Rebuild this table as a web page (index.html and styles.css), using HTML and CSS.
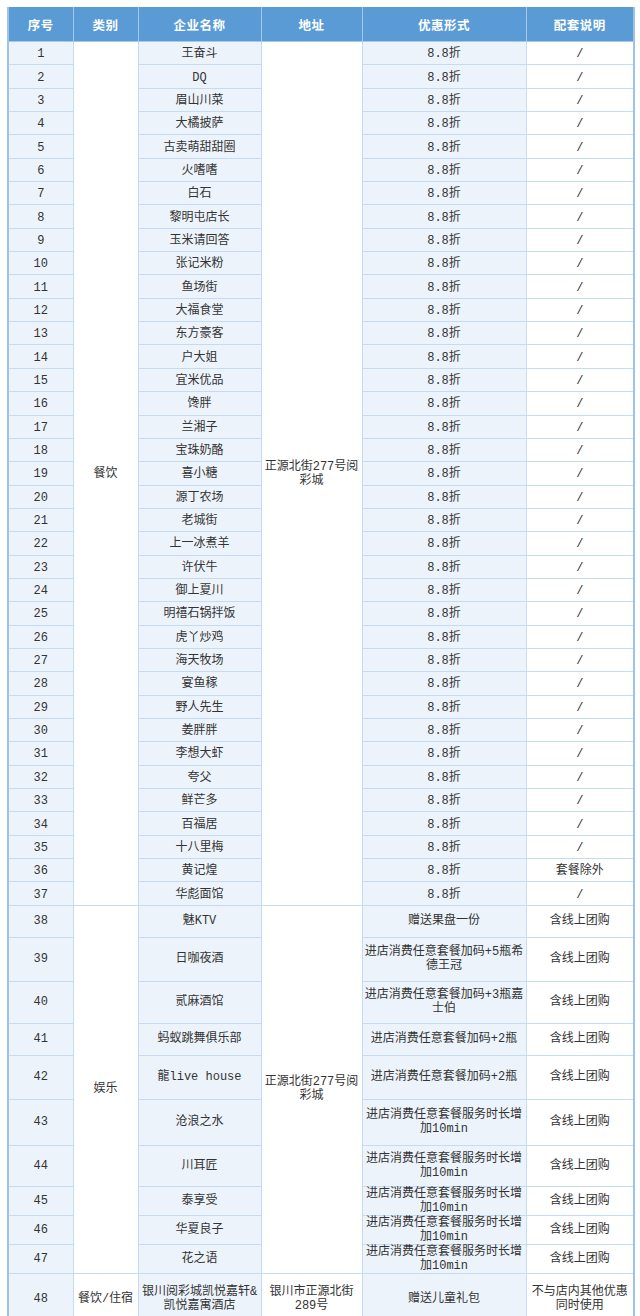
FILE: index.html
```html
<!DOCTYPE html>
<html lang="zh">
<head>
<meta charset="utf-8">
<title>优惠商家列表</title>
<link rel="stylesheet" href="styles.css">
</head>
<body>
<div class="wrap">
<table class="deals">
<colgroup>
<col class="w1"><col class="w2"><col class="w3"><col class="w4"><col class="w5"><col class="w6">
</colgroup>
<thead>
<tr><th class="c1">序号</th><th>类别</th><th>企业名称</th><th>地址</th><th>优惠形式</th><th class="c6">配套说明</th></tr>
</thead>
<tbody>
<tr class="r"><td class="lt c1">1</td><td class="wh" rowspan="37">餐饮</td><td class="lt">王奋斗</td><td class="wh" rowspan="37">正源北街277号阅<br>彩城</td><td class="lt">8.8折</td><td class="wh c6">/</td></tr>
<tr class="r"><td class="lt c1">2</td><td class="lt">DQ</td><td class="lt">8.8折</td><td class="wh c6">/</td></tr>
<tr class="r"><td class="lt c1">3</td><td class="lt">眉山川菜</td><td class="lt">8.8折</td><td class="wh c6">/</td></tr>
<tr class="r"><td class="lt c1">4</td><td class="lt">大橘披萨</td><td class="lt">8.8折</td><td class="wh c6">/</td></tr>
<tr class="r"><td class="lt c1">5</td><td class="lt">古卖萌甜甜圈</td><td class="lt">8.8折</td><td class="wh c6">/</td></tr>
<tr class="r"><td class="lt c1">6</td><td class="lt">火嗜嗜</td><td class="lt">8.8折</td><td class="wh c6">/</td></tr>
<tr class="r"><td class="lt c1">7</td><td class="lt">白石</td><td class="lt">8.8折</td><td class="wh c6">/</td></tr>
<tr class="r"><td class="lt c1">8</td><td class="lt">黎明屯店长</td><td class="lt">8.8折</td><td class="wh c6">/</td></tr>
<tr class="r"><td class="lt c1">9</td><td class="lt">玉米请回答</td><td class="lt">8.8折</td><td class="wh c6">/</td></tr>
<tr class="r"><td class="lt c1">10</td><td class="lt">张记米粉</td><td class="lt">8.8折</td><td class="wh c6">/</td></tr>
<tr class="r"><td class="lt c1">11</td><td class="lt">鱼场街</td><td class="lt">8.8折</td><td class="wh c6">/</td></tr>
<tr class="r"><td class="lt c1">12</td><td class="lt">大福食堂</td><td class="lt">8.8折</td><td class="wh c6">/</td></tr>
<tr class="r"><td class="lt c1">13</td><td class="lt">东方豪客</td><td class="lt">8.8折</td><td class="wh c6">/</td></tr>
<tr class="r"><td class="lt c1">14</td><td class="lt">户大姐</td><td class="lt">8.8折</td><td class="wh c6">/</td></tr>
<tr class="r"><td class="lt c1">15</td><td class="lt">宜米优品</td><td class="lt">8.8折</td><td class="wh c6">/</td></tr>
<tr class="r"><td class="lt c1">16</td><td class="lt">馋胖</td><td class="lt">8.8折</td><td class="wh c6">/</td></tr>
<tr class="r"><td class="lt c1">17</td><td class="lt">兰湘子</td><td class="lt">8.8折</td><td class="wh c6">/</td></tr>
<tr class="r"><td class="lt c1">18</td><td class="lt">宝珠奶酪</td><td class="lt">8.8折</td><td class="wh c6">/</td></tr>
<tr class="r"><td class="lt c1">19</td><td class="lt">喜小糖</td><td class="lt">8.8折</td><td class="wh c6">/</td></tr>
<tr class="r"><td class="lt c1">20</td><td class="lt">源丁农场</td><td class="lt">8.8折</td><td class="wh c6">/</td></tr>
<tr class="r"><td class="lt c1">21</td><td class="lt">老城街</td><td class="lt">8.8折</td><td class="wh c6">/</td></tr>
<tr class="r"><td class="lt c1">22</td><td class="lt">上一冰煮羊</td><td class="lt">8.8折</td><td class="wh c6">/</td></tr>
<tr class="r"><td class="lt c1">23</td><td class="lt">许伏牛</td><td class="lt">8.8折</td><td class="wh c6">/</td></tr>
<tr class="r"><td class="lt c1">24</td><td class="lt">御上夏川</td><td class="lt">8.8折</td><td class="wh c6">/</td></tr>
<tr class="r"><td class="lt c1">25</td><td class="lt">明禧石锅拌饭</td><td class="lt">8.8折</td><td class="wh c6">/</td></tr>
<tr class="r"><td class="lt c1">26</td><td class="lt">虎丫炒鸡</td><td class="lt">8.8折</td><td class="wh c6">/</td></tr>
<tr class="r"><td class="lt c1">27</td><td class="lt">海天牧场</td><td class="lt">8.8折</td><td class="wh c6">/</td></tr>
<tr class="r"><td class="lt c1">28</td><td class="lt">宴鱼稼</td><td class="lt">8.8折</td><td class="wh c6">/</td></tr>
<tr class="r"><td class="lt c1">29</td><td class="lt">野人先生</td><td class="lt">8.8折</td><td class="wh c6">/</td></tr>
<tr class="r"><td class="lt c1">30</td><td class="lt">姜胖胖</td><td class="lt">8.8折</td><td class="wh c6">/</td></tr>
<tr class="r"><td class="lt c1">31</td><td class="lt">李想大虾</td><td class="lt">8.8折</td><td class="wh c6">/</td></tr>
<tr class="r"><td class="lt c1">32</td><td class="lt">夸父</td><td class="lt">8.8折</td><td class="wh c6">/</td></tr>
<tr class="r"><td class="lt c1">33</td><td class="lt">鲜芒多</td><td class="lt">8.8折</td><td class="wh c6">/</td></tr>
<tr class="r"><td class="lt c1">34</td><td class="lt">百福居</td><td class="lt">8.8折</td><td class="wh c6">/</td></tr>
<tr class="r"><td class="lt c1">35</td><td class="lt">十八里梅</td><td class="lt">8.8折</td><td class="wh c6">/</td></tr>
<tr class="r"><td class="lt c1">36</td><td class="lt">黄记煌</td><td class="lt">8.8折</td><td class="wh c6">套餐除外</td></tr>
<tr class="r"><td class="lt c1">37</td><td class="lt">华彪面馆</td><td class="lt">8.8折</td><td class="wh c6">/</td></tr>
<tr class="h38"><td class="lt c1">38</td><td class="wh" rowspan="10">娱乐</td><td class="lt">魅KTV</td><td class="wh" rowspan="10">正源北街277号阅<br>彩城</td><td class="lt">赠送果盘一份</td><td class="wh c6">含线上团购</td></tr>
<tr class="h39"><td class="lt c1">39</td><td class="lt">日咖夜酒</td><td class="lt">进店消费任意套餐加码+5瓶希<br>德王冠</td><td class="wh c6">含线上团购</td></tr>
<tr class="h40"><td class="lt c1">40</td><td class="lt">贰麻酒馆</td><td class="lt">进店消费任意套餐加码+3瓶嘉<br>士伯</td><td class="wh c6">含线上团购</td></tr>
<tr class="h41"><td class="lt c1">41</td><td class="lt">蚂蚁跳舞俱乐部</td><td class="lt">进店消费任意套餐加码+2瓶</td><td class="wh c6">含线上团购</td></tr>
<tr class="h42"><td class="lt c1">42</td><td class="lt">龍live house</td><td class="lt">进店消费任意套餐加码+2瓶</td><td class="wh c6">含线上团购</td></tr>
<tr class="h43"><td class="lt c1">43</td><td class="lt">沧浪之水</td><td class="lt">进店消费任意套餐服务时长增<br>加10min</td><td class="wh c6">含线上团购</td></tr>
<tr class="h44"><td class="lt c1">44</td><td class="lt">川耳匠</td><td class="lt">进店消费任意套餐服务时长增<br>加10min</td><td class="wh c6">含线上团购</td></tr>
<tr class="h45"><td class="lt c1">45</td><td class="lt">泰享受</td><td class="lt">进店消费任意套餐服务时长增<br>加10min</td><td class="wh c6">含线上团购</td></tr>
<tr class="h46"><td class="lt c1">46</td><td class="lt">华夏良子</td><td class="lt">进店消费任意套餐服务时长增<br>加10min</td><td class="wh c6">含线上团购</td></tr>
<tr class="h47"><td class="lt c1">47</td><td class="lt">花之语</td><td class="lt">进店消费任意套餐服务时长增<br>加10min</td><td class="wh c6">含线上团购</td></tr>
<tr class="h48"><td class="lt c1">48</td><td class="wh">餐饮/住宿</td><td class="lt">银川阅彩城凯悦嘉轩&amp;<br>凯悦嘉寓酒店</td><td class="wh">银川市正源北街<br>289号</td><td class="lt">赠送儿童礼包</td><td class="wh c6">不与店内其他优惠<br>同时使用</td></tr>
</tbody>
</table>
</div>
</body>
</html>
```
FILE: styles.css
```css
html, body {
  margin: 0;
  padding: 0;
  background: #ffffff;
}

.wrap {
  padding: 7px 7px 20px 7px;
}

.deals {
  border-collapse: collapse;
  table-layout: fixed;
  width: 626px;
  font-family: "Liberation Mono", "Noto Sans CJK SC", monospace;
  font-size: 12px;
  color: #333333;
}

.w1 { width: 65px; }
.w2 { width: 65px; }
.w3 { width: 123px; }
.w4 { width: 101px; }
.w5 { width: 164px; }
.w6 { width: 108px; }

.deals th {
  height: 34px;
  padding: 0;
  background: #5b9bd5;
  color: #ffffff;
  font-family: "Noto Sans CJK SC", sans-serif;
  font-size: 12.5px;
  font-weight: bold;
  letter-spacing: 0.5px;
  border: 1px solid #a6c8ea;
  border-top: none;
  text-align: center;
  vertical-align: middle;
}

.deals td {
  padding: 0 2px;
  border: 1px solid #c4dbf1;
  text-align: center;
  vertical-align: middle;
  line-height: 14px;
  white-space: nowrap;
}

.deals .r td {
  padding-top: 2px;
}

.deals td.lt { background: #edf3fb; }
.deals td.wh { background: #ffffff; }

.deals .c1 { border-left: 2px solid #9dc3e8; }
.deals .c6 { border-right: 2px solid #9dc3e8; }

.r { height: 23.35px; }
.h38 { height: 32px; }
.h39 { height: 44px; }
.h40 { height: 42px; }
.h41 { height: 32px; }
.h42 { height: 44px; }
.h43 { height: 46.5px; }
.h44 { height: 40.7px; }
.h45 { height: 28.3px; }
.h46 { height: 29px; }
.h47 { height: 28.7px; }
.h48 { height: 51px; }
```
